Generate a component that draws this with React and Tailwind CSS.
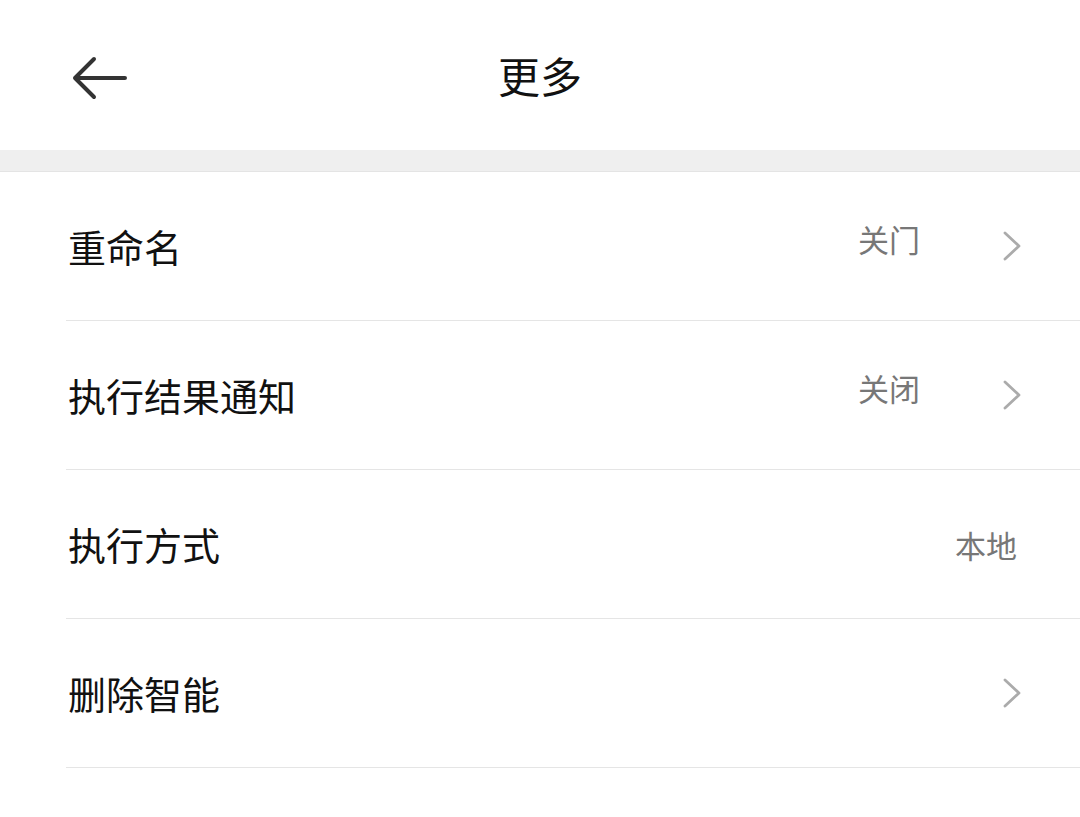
const rows = [
  { label: "重命名", value: "关门", arrow: true },
  { label: "执行结果通知", value: "关闭", arrow: true },
  { label: "执行方式", value: "本地", arrow: false },
  { label: "删除智能", value: "", arrow: true },
];

function BackArrow() {
  return (
    <svg width="56" height="44" viewBox="0 0 56 44" fill="none">
      <path
        d="M53 22H3M22 3L3 22l19 19"
        stroke="#333"
        strokeWidth="4"
        strokeLinecap="round"
        strokeLinejoin="round"
      />
    </svg>
  );
}

function Chevron() {
  return (
    <svg width="20" height="32" viewBox="0 0 20 32" fill="none">
      <path
        d="M3 3l14 13L3 29"
        stroke="#ababab"
        strokeWidth="2.8"
        strokeLinecap="round"
        strokeLinejoin="round"
      />
    </svg>
  );
}

export default function App() {
  return (
    <div
      className="w-[1080px] h-[817px] bg-white overflow-hidden"
      style={{ fontFamily: '"Noto Sans CJK SC", "Noto Sans", sans-serif' }}
    >
      {/* Header */}
      <div className="relative h-[150px] flex items-center justify-center">
        <button className="absolute left-[72px] top-[56px]">
          <BackArrow />
        </button>
        <h1 className="text-[42px] text-[#111] leading-none">更多</h1>
      </div>

      <div className="h-[22px] bg-[#efefef] border-b border-[#e4e4e4]" />

      {/* List */}
      <div className="pl-[66px]">
        {rows.map((row) => (
          <div
            key={row.label}
            className="h-[149px] flex items-center border-b border-[#e5e5e5] pr-[58px]"
          >
            <span className="pl-[2px] text-[38px] text-[#111] leading-none flex-1">
              {row.label}
            </span>
            {row.value && (
              <span
                className={`text-[31px] text-[#777] leading-none ${
                  row.arrow ? "-translate-y-[8px] mr-[82px]" : "mr-[5px]"
                }`}
              >
                {row.value}
              </span>
            )}
            {row.arrow && <Chevron />}
          </div>
        ))}
      </div>
    </div>
  );
}
